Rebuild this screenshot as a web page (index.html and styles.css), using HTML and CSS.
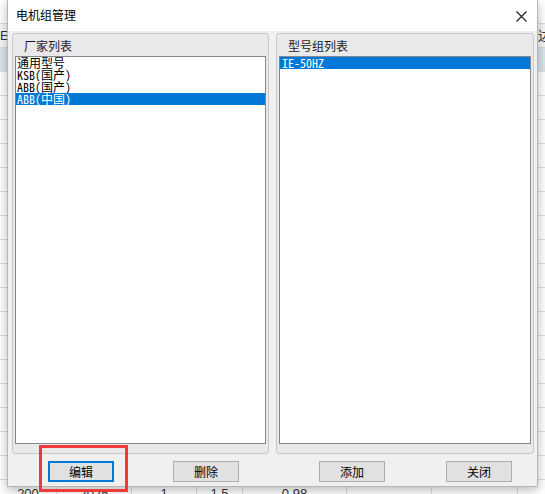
FILE: index.html
```html
<!DOCTYPE html>
<html lang="zh">
<head>
<meta charset="utf-8">
<title>电机组管理</title>
<link rel="stylesheet" href="styles.css">
</head>
<body>
<div class="sheet">
  <div class="row"><div class="c c0"></div><div class="c c1"></div><div class="c c2"></div><div class="c c3"></div><div class="c c4"></div><div class="c c5"></div><div class="c c6"></div><div class="c c7"></div></div>
  <div class="row head"><div class="c c0 lead">EI</div><div class="c c1"></div><div class="c c2"></div><div class="c c3"></div><div class="c c4"></div><div class="c c5"></div><div class="c c6"></div><div class="c c7 tail">达标</div></div>
  <div class="row sel"><div class="c c0"></div><div class="c c1"></div><div class="c c2"></div><div class="c c3"></div><div class="c c4"></div><div class="c c5"></div><div class="c c6"></div><div class="c c7"></div></div>
  <div class="row"><div class="c c0"></div><div class="c c1"></div><div class="c c2"></div><div class="c c3"></div><div class="c c4"></div><div class="c c5"></div><div class="c c6"></div><div class="c c7"></div></div>
  <div class="row"><div class="c c0"></div><div class="c c1"></div><div class="c c2"></div><div class="c c3"></div><div class="c c4"></div><div class="c c5"></div><div class="c c6"></div><div class="c c7"></div></div>
  <div class="row"><div class="c c0"></div><div class="c c1"></div><div class="c c2"></div><div class="c c3"></div><div class="c c4"></div><div class="c c5"></div><div class="c c6"></div><div class="c c7"></div></div>
  <div class="row"><div class="c c0"></div><div class="c c1"></div><div class="c c2"></div><div class="c c3"></div><div class="c c4"></div><div class="c c5"></div><div class="c c6"></div><div class="c c7"></div></div>
  <div class="row"><div class="c c0"></div><div class="c c1"></div><div class="c c2"></div><div class="c c3"></div><div class="c c4"></div><div class="c c5"></div><div class="c c6"></div><div class="c c7"></div></div>
  <div class="row"><div class="c c0"></div><div class="c c1"></div><div class="c c2"></div><div class="c c3"></div><div class="c c4"></div><div class="c c5"></div><div class="c c6"></div><div class="c c7"></div></div>
  <div class="row"><div class="c c0"></div><div class="c c1"></div><div class="c c2"></div><div class="c c3"></div><div class="c c4"></div><div class="c c5"></div><div class="c c6"></div><div class="c c7"></div></div>
  <div class="row"><div class="c c0"></div><div class="c c1"></div><div class="c c2"></div><div class="c c3"></div><div class="c c4"></div><div class="c c5"></div><div class="c c6"></div><div class="c c7"></div></div>
  <div class="row"><div class="c c0"></div><div class="c c1"></div><div class="c c2"></div><div class="c c3"></div><div class="c c4"></div><div class="c c5"></div><div class="c c6"></div><div class="c c7"></div></div>
  <div class="row"><div class="c c0"></div><div class="c c1"></div><div class="c c2"></div><div class="c c3"></div><div class="c c4"></div><div class="c c5"></div><div class="c c6"></div><div class="c c7"></div></div>
  <div class="row"><div class="c c0"></div><div class="c c1"></div><div class="c c2"></div><div class="c c3"></div><div class="c c4"></div><div class="c c5"></div><div class="c c6"></div><div class="c c7"></div></div>
  <div class="row"><div class="c c0"></div><div class="c c1"></div><div class="c c2"></div><div class="c c3"></div><div class="c c4"></div><div class="c c5"></div><div class="c c6"></div><div class="c c7"></div></div>
  <div class="row"><div class="c c0"></div><div class="c c1"></div><div class="c c2"></div><div class="c c3"></div><div class="c c4"></div><div class="c c5"></div><div class="c c6"></div><div class="c c7"></div></div>
  <div class="row"><div class="c c0"></div><div class="c c1"></div><div class="c c2"></div><div class="c c3"></div><div class="c c4"></div><div class="c c5"></div><div class="c c6"></div><div class="c c7"></div></div>
  <div class="row"><div class="c c0"></div><div class="c c1"></div><div class="c c2"></div><div class="c c3"></div><div class="c c4"></div><div class="c c5"></div><div class="c c6"></div><div class="c c7"></div></div>
  <div class="row"><div class="c c0"></div><div class="c c1"></div><div class="c c2"></div><div class="c c3"></div><div class="c c4"></div><div class="c c5"></div><div class="c c6"></div><div class="c c7"></div></div>
  <div class="row"><div class="c c0"></div><div class="c c1"></div><div class="c c2"></div><div class="c c3"></div><div class="c c4"></div><div class="c c5"></div><div class="c c6"></div><div class="c c7"></div></div>
  <div class="row data"><div class="c c0">200</div><div class="c c1">2025</div><div class="c c2">1</div><div class="c c3">1.5</div><div class="c c4">0.98</div><div class="c c5"></div><div class="c c6"></div><div class="c c7"></div></div>
</div>

<div class="dialog">
  <div class="titlebar">
    <span class="title">电机组管理</span>
    <svg class="close" width="11" height="11" viewBox="0 0 11 11" aria-label="关闭">
      <path d="M0.5 0.5 L10.5 10.5 M10.5 0.5 L0.5 10.5" stroke="#1a1a1a" stroke-width="1.1" fill="none"/>
    </svg>
  </div>
  <div class="body">
    <div class="groups">
      <div class="group group-left">
        <div class="group-head">厂家列表</div>
        <div class="listbox">
          <div class="item">通用型号</div>
          <div class="item">KSB(国产)</div>
          <div class="item">ABB(国产)</div>
          <div class="item selected">ABB(中国)</div>
        </div>
      </div>
      <div class="group group-right">
        <div class="group-head">型号组列表</div>
        <div class="listbox">
          <div class="item selected">IE-50HZ</div>
        </div>
      </div>
    </div>
    <div class="buttons">
      <button class="btn btn-edit focused">编辑</button>
      <button class="btn btn-delete">删除</button>
      <button class="btn btn-add">添加</button>
      <button class="btn btn-close">关闭</button>
    </div>
  </div>
</div>

<div class="annotation"></div>
</body>
</html>
```

FILE: styles.css
```css
* {
  box-sizing: border-box;
}

html, body {
  margin: 0;
  padding: 0;
}

body {
  width: 545px;
  height: 494px;
  overflow: hidden;
  background: #ffffff;
  font-family: "Noto Sans CJK SC", "Noto Sans", sans-serif;
  position: relative;
}

/* background spreadsheet */
.sheet {
  display: flex;
  flex-direction: column;
  width: 545px;
  overflow: hidden;
  color: #333333;
  font-family: "Liberation Sans", "Noto Sans CJK SC", sans-serif;
  font-size: 13px;
}

.row {
  display: flex;
  height: 24px;
  border-bottom: 1px solid #dcdcdc;
}

.row.head {
  background: #f7f7f7;
}

.row.sel {
  background: #dbe3ec;
}

.c {
  border-right: 1px solid #dcdcdc;
  line-height: 24px;
  text-align: center;
  white-space: nowrap;
  overflow: hidden;
  flex: none;
}

.c0 { width: 57px; }
.c1 { width: 75px; }
.c2 { width: 65px; }
.c3 { width: 46px; }
.c4 { width: 104px; }
.c5 { width: 85px; }
.c6 { width: 86px; }
.c7 { width: 27px; border-right: none; }

.c0.lead {
  text-align: left;
  padding-left: 0;
}

.c7.tail {
  text-align: left;
  padding-left: 20px;
}

.row.data .c {
  line-height: 27px;
}

/* dialog window */
.dialog {
  position: absolute;
  left: 7px;
  top: 0;
  width: 531px;
  height: 487px;
  background: #f0f0f0;
  border: 1px solid #b5b5b5;
  border-top: none;
  box-shadow: 0 3px 10px rgba(0, 0, 0, 0.28);
  display: flex;
  flex-direction: column;
}

.titlebar {
  height: 31px;
  background: #ffffff;
  display: flex;
  align-items: center;
  justify-content: space-between;
  padding: 0 10px 0 8px;
  flex: none;
}

.title {
  font-size: 12px;
  color: #000000;
  line-height: 12px;
  margin-top: -1px;
}

.close {
  display: block;
  margin-top: 1px;
}

.body {
  flex: 1;
  display: flex;
  flex-direction: column;
  padding: 2px 3px 0 4px;
}

.groups {
  display: flex;
  gap: 7px;
}

.group {
  height: 421px;
  border: 1px solid #c6c7ca;
  border-radius: 3px;
  background: #e9e9eb;
  display: flex;
  flex-direction: column;
  padding: 0 1px 9px 1px;
}

.group-left {
  width: 257px;
}

.group-right {
  width: 258px;
}

.group-head {
  height: 22px;
  line-height: 22px;
  font-size: 12px;
  color: #1a1a1a;
  padding-left: 10px;
  padding-top: 1px;
  flex: none;
}

.listbox {
  flex: 1;
  margin: 0 1px;
  border: 1px solid #828790;
  background: #ffffff;
  display: flex;
  flex-direction: column;
}

.item {
  height: 12px;
  line-height: 12px;
  font-size: 12px;
  padding-left: 1px;
  color: #000000;
  font-family: "Noto Sans Mono CJK SC", "Liberation Mono", "Noto Sans CJK SC", monospace;
  white-space: nowrap;
  overflow: hidden;
}

.item.selected {
  background: #0078d7;
  color: #ffffff;
}

.group-right .item {
  padding-left: 2px;
}

/* button row */
.buttons {
  display: flex;
  margin-top: 7px;
  padding-left: 36px;
}

.btn {
  width: 66px;
  height: 21px;
  padding: 0;
  margin: 0;
  background: #e1e1e1;
  border: 1px solid #adadad;
  border-radius: 0;
  font-family: "Noto Sans CJK SC", "Noto Sans", sans-serif;
  font-size: 12px;
  line-height: 12px;
  color: #000000;
  flex: none;
}

.btn.focused {
  border: 2px solid #0078d7;
}

.btn-delete {
  margin-left: 59px;
}

.btn-add {
  margin-left: 80px;
}

.btn-close {
  margin-left: 61px;
}

/* red annotation frame over the screenshot */
.annotation {
  position: absolute;
  left: 39px;
  top: 445px;
  width: 89px;
  height: 47px;
  border: 3px solid #ee3a3a;
}
```
